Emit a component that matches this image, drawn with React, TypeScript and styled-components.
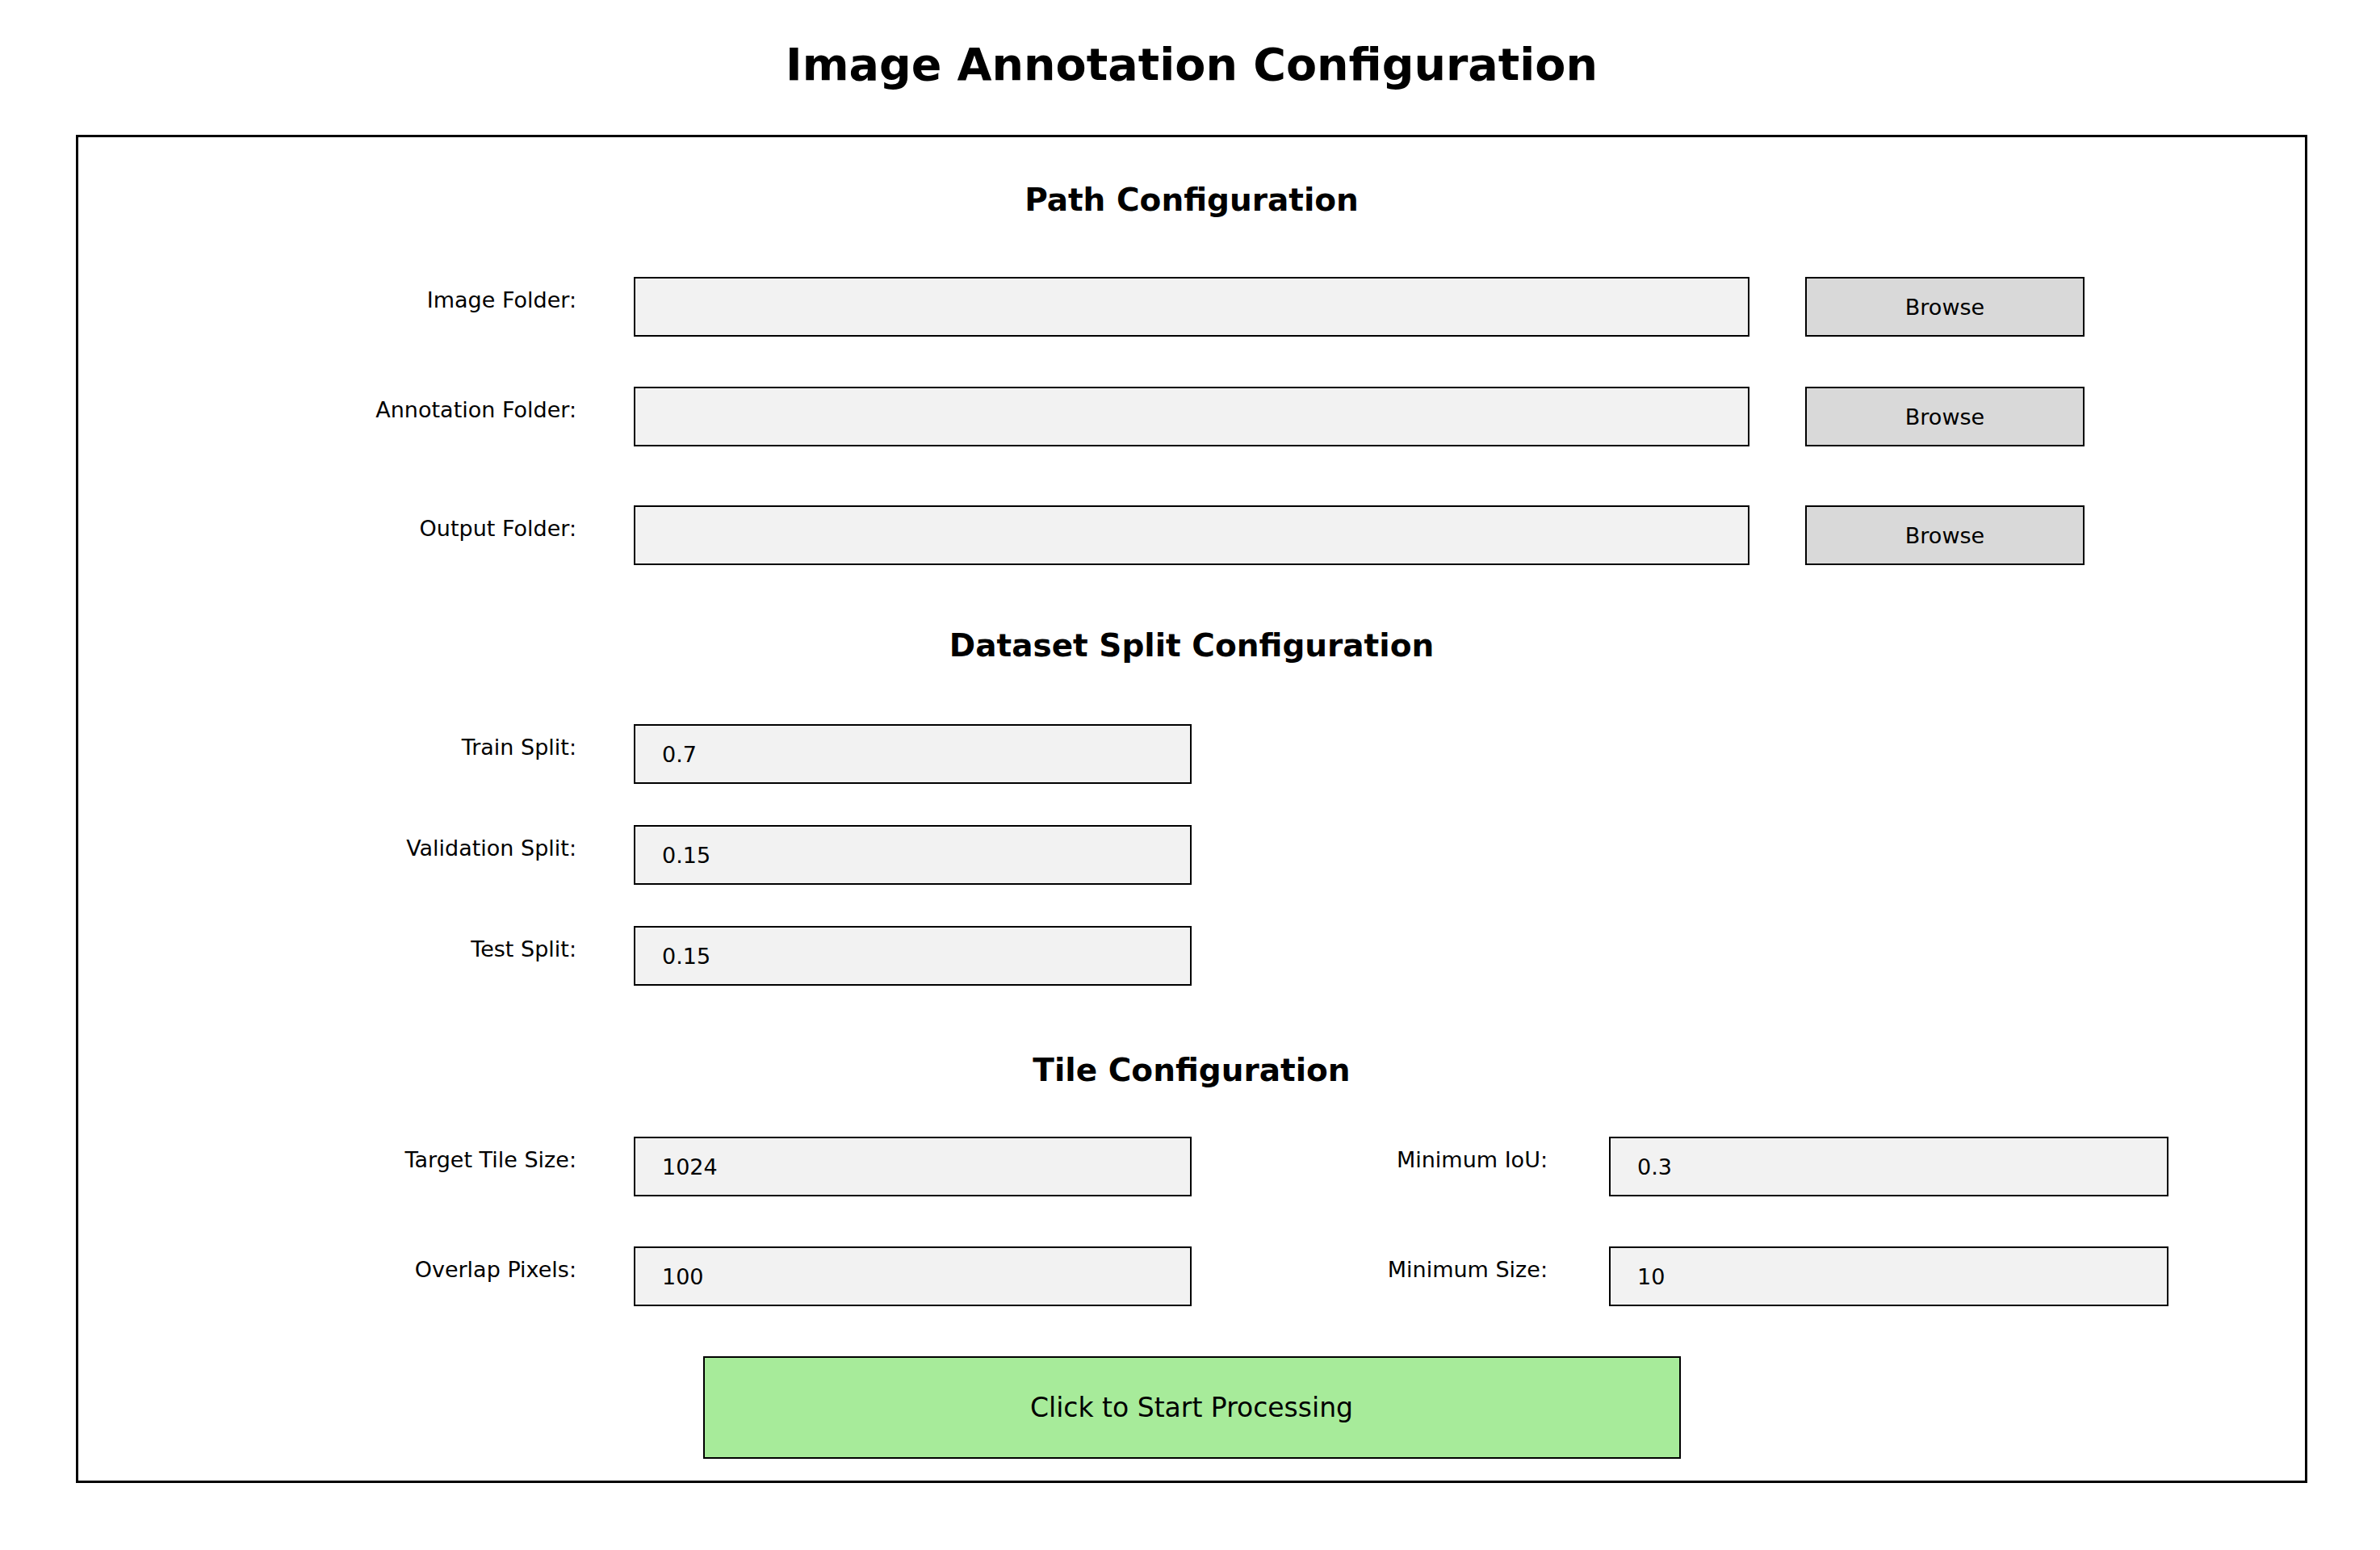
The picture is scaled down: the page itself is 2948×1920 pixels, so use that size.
import React from "react";
import styled, { createGlobalStyle } from "styled-components";

const GlobalStyle = createGlobalStyle`
  html, body {
    margin: 0;
    padding: 0;
    background: #ffffff;
  }
  body {
    font-family: "DejaVu Sans", "Liberation Sans", sans-serif;
    color: #000000;
  }
`;

const Page = styled.div`
  width: 2948px;
  height: 1920px;
  box-sizing: border-box;
  padding-top: 52px;
  padding-left: 4px;
  display: flex;
  flex-direction: column;
  align-items: center;
`;

const Title = styled.h1`
  margin: 0;
  font-family: "DejaVu Sans", sans-serif;
  font-weight: bold;
  font-size: 55.5px;
  line-height: 55px;
  height: 55px;
  text-align: center;
`;

const Panel = styled.div`
  margin-top: 60px;
  width: 2764px;
  height: 1670px;
  box-sizing: border-box;
  border: 3px solid #000000;
  padding-bottom: 27px;
  display: flex;
  flex-direction: column;
`;

const SectionHeading = styled.h2<{ $mt: number }>`
  margin: ${(p) => p.$mt}px 0 0 0;
  font-family: "DejaVu Sans", sans-serif;
  font-weight: bold;
  font-size: 39px;
  line-height: 39px;
  height: 39px;
  text-align: center;
`;

const FieldRow = styled.div<{ $mt: number }>`
  margin-top: ${(p) => p.$mt}px;
  height: 74px;
  display: flex;
  align-items: center;
`;

const Label = styled.div<{ $w: number }>`
  width: ${(p) => p.$w}px;
  flex: none;
  box-sizing: border-box;
  padding-bottom: 16px;
  text-align: right;
  font-size: 27px;
  line-height: 32px;
  white-space: nowrap;
`;

const TextField = styled.div<{ $w: number; $ml: number }>`
  width: ${(p) => p.$w}px;
  margin-left: ${(p) => p.$ml}px;
  flex: none;
  height: 74px;
  box-sizing: border-box;
  border: 2px solid #000000;
  background: #f2f2f2;
  padding-left: 33px;
  display: flex;
  align-items: center;
  font-size: 27px;
`;

const BrowseButton = styled.div`
  width: 346px;
  margin-left: 69px;
  flex: none;
  height: 74px;
  box-sizing: border-box;
  border: 2px solid #000000;
  background: #d9d9d9;
  display: flex;
  align-items: center;
  justify-content: center;
  font-size: 27px;
`;

const StartButton = styled.div`
  margin: 62px auto 0 auto;
  width: 1211px;
  height: 127px;
  box-sizing: border-box;
  border: 2px solid #000000;
  background: #a7eb9a;
  display: flex;
  align-items: center;
  justify-content: center;
  font-size: 33px;
`;

const LABEL_W = 617;
const GAP = 71;

const pathRows = [
  { label: "Image Folder:", mt: 76 },
  { label: "Annotation Folder:", mt: 62 },
  { label: "Output Folder:", mt: 73 },
];

const splitRows = [
  { label: "Train Split:", value: "0.7", mt: 78 },
  { label: "Validation Split:", value: "0.15", mt: 51 },
  { label: "Test Split:", value: "0.15", mt: 51 },
];

const tileRows = [
  { l1: "Target Tile Size:", v1: "1024", l2: "Minimum IoU:", v2: "0.3", mt: 63 },
  { l1: "Overlap Pixels:", v1: "100", l2: "Minimum Size:", v2: "10", mt: 62 },
];

export default function App() {
  return (
    <>
      <GlobalStyle />
      <Page>
        <Title>Image Annotation Configuration</Title>
        <Panel>
          <SectionHeading $mt={58}>Path Configuration</SectionHeading>
          {pathRows.map((r) => (
            <FieldRow key={r.label} $mt={r.mt}>
              <Label $w={LABEL_W}>{r.label}</Label>
              <TextField $w={1382} $ml={GAP} />
              <BrowseButton>Browse</BrowseButton>
            </FieldRow>
          ))}

          <SectionHeading $mt={80}>Dataset Split Configuration</SectionHeading>
          {splitRows.map((r) => (
            <FieldRow key={r.label} $mt={r.mt}>
              <Label $w={LABEL_W}>{r.label}</Label>
              <TextField $w={691} $ml={GAP}>{r.value}</TextField>
            </FieldRow>
          ))}

          <SectionHeading $mt={85}>Tile Configuration</SectionHeading>
          {tileRows.map((r) => (
            <FieldRow key={r.l1} $mt={r.mt}>
              <Label $w={LABEL_W}>{r.l1}</Label>
              <TextField $w={691} $ml={GAP}>{r.v1}</TextField>
              <Label $w={441}>{r.l2}</Label>
              <TextField $w={693} $ml={76}>{r.v2}</TextField>
            </FieldRow>
          ))}

          <StartButton>Click to Start Processing</StartButton>
        </Panel>
      </Page>
    </>
  );
}
